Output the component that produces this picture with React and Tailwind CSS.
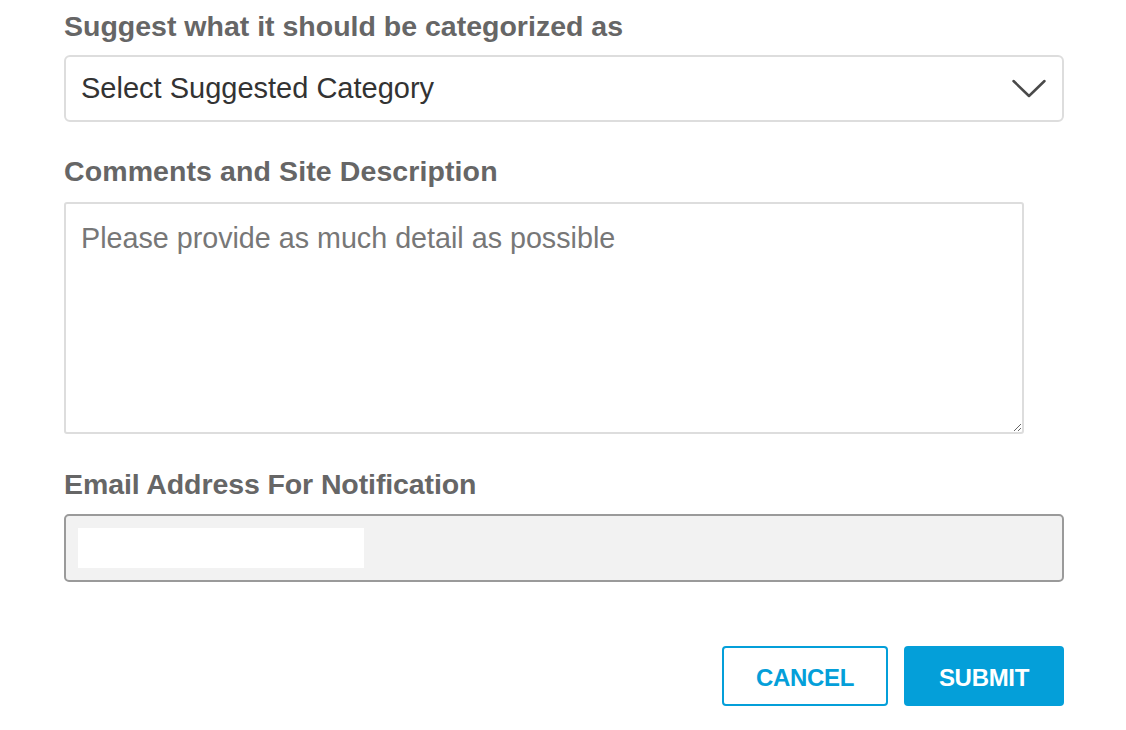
import React from "react";

const labelClass =
  "text-[28.5px] leading-[32px] font-bold text-[#666666]";

export default function App() {
  return (
    <div
      className="min-h-screen bg-white pl-[64px]"
      style={{ fontFamily: '"Liberation Sans", Arial, sans-serif' }}
    >
      <div className="flex flex-col w-[1000px]">
        <label className={`${labelClass} mt-[10px]`}>
          Suggest what it should be categorized as
        </label>

        {/* Category select */}
        <div className="relative mt-[13px] h-[67px] border-2 border-[#dddddd] rounded-[6px] bg-white flex items-center pl-[15px] pr-[16px]">
          <span className="text-[29px] text-[#333333] flex-1">
            Select Suggested Category
          </span>
          <svg width="34" height="20" viewBox="0 0 34 20" fill="none">
            <path
              d="M1.5 2 L17 17 L32.5 2"
              stroke="#4a4a4a"
              strokeWidth="2.5"
              strokeLinecap="round"
              strokeLinejoin="round"
            />
          </svg>
        </div>

        <label className={`${labelClass} mt-[33px] tracking-[0.1px]`}>
          Comments and Site Description
        </label>

        <textarea
          className="mt-[15px] w-[960px] h-[232px] border-2 border-[#dddddd] rounded-[3px] px-[15px] py-[18px] text-[28.7px] leading-[32px] text-[#333333] placeholder:text-[#777777] outline-none"
          placeholder="Please provide as much detail as possible"
        />

        <label className={`${labelClass} mt-[34px] tracking-[-0.1px]`}>
          Email Address For Notification
        </label>

        {/* Email (read only) */}
        <div className="mt-[14px] h-[68px] border-2 border-[#9a9a9a] rounded-[5px] bg-[#f2f2f2] flex items-center pl-[12px]">
          <div className="w-[286px] h-[40px] bg-white" />
        </div>

        <div className="mt-[64px] flex justify-end gap-[16px]">
          <button
            type="button"
            className="w-[166px] h-[60px] pt-[3px] border-2 border-[#049fd9] rounded-[4px] bg-white text-[#049fd9] text-[24px] font-bold tracking-[-0.3px]"
          >
            CANCEL
          </button>
          <button
            type="button"
            className="w-[160px] h-[60px] pt-[3px] rounded-[4px] bg-[#049fd9] text-white text-[24px] font-bold tracking-[-0.3px]"
          >
            SUBMIT
          </button>
        </div>
      </div>
    </div>
  );
}
